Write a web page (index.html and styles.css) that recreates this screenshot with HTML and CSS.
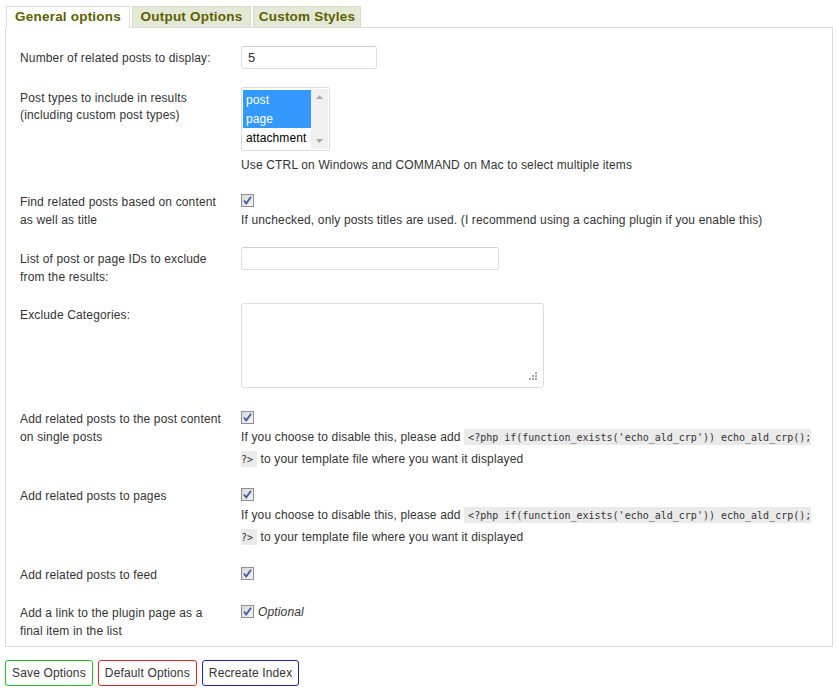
FILE: index.html
```html
<!DOCTYPE html>
<html>
<head>
<meta charset="utf-8">
<link rel="stylesheet" href="styles.css">
</head>
<body>
<div class="wrap">
  <ul class="tabs">
    <li class="tab tab--active tab--general">General options</li>
    <li class="tab tab--output">Output Options</li>
    <li class="tab tab--styles">Custom Styles</li>
  </ul>
  <div class="panel">
    <div class="row">
      <div class="label label--input">Number of related posts to display:</div>
      <div class="field"><input class="text-input text-input--short" type="text" value="5"></div>
    </div>
    <div class="row">
      <div class="label label--list">Post types to include in results (including custom post types)</div>
      <div class="field field--list">
        <div class="listbox">
          <div class="listbox__options">
            <div class="listbox__opt listbox__opt--sel">post</div>
            <div class="listbox__opt listbox__opt--sel">page</div>
            <div class="listbox__opt">attachment</div>
          </div>
          <div class="listbox__scroll">
            <svg class="arrow" width="7" height="4" viewBox="0 0 7 4"><path d="M0 4 L3.5 0 L7 4 Z" fill="#a9a9a9"/></svg>
            <svg class="arrow" width="7" height="4" viewBox="0 0 7 4"><path d="M0 0 L3.5 4 L7 0 Z" fill="#a9a9a9"/></svg>
          </div>
        </div>
        <p class="hint hint--after-list">Use CTRL on Windows and COMMAND on Mac to select multiple items</p>
      </div>
    </div>
    <div class="row row--content">
      <div class="label">Find related posts based on content as well as title</div>
      <div class="field">
        <span class="check"><svg width="13" height="13" viewBox="0 0 13 13"><defs><linearGradient id="cb1" x1="0" y1="0" x2="1" y2="1"><stop offset="0" stop-color="#d8d8d8"/><stop offset="1" stop-color="#f4f4f4"/></linearGradient></defs><rect x="0.5" y="0.5" width="12" height="12" fill="url(#cb1)" stroke="#8e8f8f"/><path d="M3 6.5 L5.2 9.5 L10 2.8" fill="none" stroke="#3d5c9e" stroke-width="1.8"/></svg></span>
        <p class="hint hint--after-check">If unchecked, only posts titles are used. (I recommend using a caching plugin if you enable this)</p>
      </div>
    </div>
    <div class="row">
      <div class="label label--input">List of post or page IDs to exclude from the results:</div>
      <div class="field"><input class="text-input text-input--long" type="text" value=""></div>
    </div>
    <div class="row">
      <div class="label label--input">Exclude Categories:</div>
      <div class="field">
        <div class="textarea">
          <svg class="grip" width="9" height="9" viewBox="0 0 9 9"><g fill="#a8a8a8"><rect x="7" y="0" width="2" height="2"/><rect x="4" y="3" width="2" height="2"/><rect x="7" y="3" width="2" height="2"/><rect x="1" y="6" width="2" height="2"/><rect x="4" y="6" width="2" height="2"/><rect x="7" y="6" width="2" height="2"/></g></svg>
        </div>
      </div>
    </div>
    <div class="row">
      <div class="label">Add related posts to the post content on single posts</div>
      <div class="field field--code">
        <span class="check"><svg width="13" height="13" viewBox="0 0 13 13"><rect x="0.5" y="0.5" width="12" height="12" fill="url(#cb1)" stroke="#8e8f8f"/><path d="M3 6.5 L5.2 9.5 L10 2.8" fill="none" stroke="#3d5c9e" stroke-width="1.8"/></svg></span>
        <p class="hint hint--code">If you choose to disable this, please add <code>&lt;?php if(function_exists('echo_ald_crp')) echo_ald_crp(); ?&#8288;&gt;</code> to your template file where you want it displayed</p>
      </div>
    </div>
    <div class="row">
      <div class="label">Add related posts to pages</div>
      <div class="field field--code field--code-last">
        <span class="check"><svg width="13" height="13" viewBox="0 0 13 13"><rect x="0.5" y="0.5" width="12" height="12" fill="url(#cb1)" stroke="#8e8f8f"/><path d="M3 6.5 L5.2 9.5 L10 2.8" fill="none" stroke="#3d5c9e" stroke-width="1.8"/></svg></span>
        <p class="hint hint--code">If you choose to disable this, please add <code>&lt;?php if(function_exists('echo_ald_crp')) echo_ald_crp(); ?&#8288;&gt;</code> to your template file where you want it displayed</p>
      </div>
    </div>
    <div class="row">
      <div class="label">Add related posts to feed</div>
      <div class="field field--single">
        <span class="check"><svg width="13" height="13" viewBox="0 0 13 13"><rect x="0.5" y="0.5" width="12" height="12" fill="url(#cb1)" stroke="#8e8f8f"/><path d="M3 6.5 L5.2 9.5 L10 2.8" fill="none" stroke="#3d5c9e" stroke-width="1.8"/></svg></span>
      </div>
    </div>
    <div class="row row--last">
      <div class="label">Add a link to the plugin page as a final item in the list</div>
      <div class="field">
        <span class="check check--inline"><svg width="13" height="13" viewBox="0 0 13 13"><rect x="0.5" y="0.5" width="12" height="12" fill="url(#cb1)" stroke="#8e8f8f"/><path d="M3 6.5 L5.2 9.5 L10 2.8" fill="none" stroke="#3d5c9e" stroke-width="1.8"/></svg></span><em class="optional">Optional</em>
      </div>
    </div>
  </div>
  <div class="buttons">
    <button class="btn btn--save">Save Options</button>
    <button class="btn btn--default">Default Options</button>
    <button class="btn btn--index">Recreate Index</button>
  </div>
</div>
</body>
</html>
```
FILE: styles.css
```css
body {
  margin: 0;
  background: #fff;
  font-family: "Liberation Sans", Arial, sans-serif;
  font-size: 12px;
  letter-spacing: 0.15px;
  color: #333;
}
.wrap {
  width: 828px;
  margin: 6px 0 0 5px;
}
.tabs {
  display: flex;
  gap: 2px;
  margin: 0;
  padding: 0 0 0 1px;
  list-style: none;
  height: 21px;
}
.tab {
  box-sizing: border-box;
  height: 21px;
  padding: 0;
  text-align: center;
  border: 1px solid #d6dac6;
  border-bottom: none;
  background: #e4e8d6;
  color: #5e5f00;
  font: bold 13.5px/20px "Liberation Sans", Arial, sans-serif;
  letter-spacing: 0.2px;
}
.tab--general { width: 124px; }
.tab--output { width: 119px; }
.tab--styles { width: 108px; }
.tab--active {
  position: relative;
  z-index: 1;
  height: 22px;
  background: #fff;
  border-color: #dcdcdc;
}
.panel {
  border: 1px solid #dcdcdc;
  padding: 8px 4px 0;
}
.row {
  display: grid;
  grid-template-columns: 224px 1fr;
}
.label {
  padding: 9px 10px 7px;
  line-height: 18px;
}
.label--input { padding-top: 13px; }
.label--list { padding-top: 12px; line-height: 17px; }
.field {
  padding: 8px 10px 9px 7px;
  line-height: 18px;
}
.field--list { padding-bottom: 10px; }
.row--content .label { padding-bottom: 8px; }
.row--content .field { padding-bottom: 5px; }
.field--code { padding-bottom: 8px; }
.field--code-last { padding-bottom: 9px; }
.field--code-last .hint--code { margin-top: 4px; }
.field--single { padding-bottom: 12px; }
.row--last .label { padding-bottom: 6px; }
.text-input {
  display: block;
  box-sizing: border-box;
  margin: 2px 0 0;
  height: 23px;
  padding: 0 6px;
  border: 1px solid #dfdfdf;
  border-top-color: #cfcfcf;
  border-radius: 3px;
  font: 13px "Liberation Sans", Arial, sans-serif;
  color: #333;
  background: #fff;
  outline: none;
}
.text-input--short { width: 136px; }
.text-input--long { width: 258px; }
.listbox {
  display: flex;
  box-sizing: border-box;
  width: 89px;
  height: 64px;
  margin-top: 1px;
  padding: 1px;
  border: 1px solid #dcdcdc;
  border-radius: 2px;
  background: #fff;
}
.listbox__options {
  flex: 1;
  padding-top: 1px;
}
.listbox__opt {
  height: 19px;
  line-height: 20px;
  padding-left: 3px;
  font-size: 12px;
  letter-spacing: 0.1px;
  color: #000;
}
.listbox__opt--sel {
  background: #3399ff;
  color: #fff;
}
.listbox__scroll {
  width: 17px;
  background: #f0f0f0;
  display: flex;
  flex-direction: column;
  justify-content: space-between;
  align-items: center;
  padding: 6px 0 6px;
}
.arrow { display: block; }
.hint {
  margin: 0;
  line-height: 18px;
}
.hint--after-list { margin-top: 5px; }
.hint--after-check { margin-top: 4px; }
.hint--code { margin-top: 2px; line-height: 21.5px; }
code {
  font-family: "DejaVu Sans Mono", monospace;
  font-size: 10px;
  letter-spacing: 0;
  background: #eaeaea;
  padding: 3px 4px 2px;
  color: #333;
}
.check {
  display: block;
  width: 13px;
  height: 13px;
  margin: 2px 0 3px;
}
.check svg { display: block; }
.check--inline {
  display: inline-block;
  vertical-align: -2px;
  margin: 0 4px 0 0;
}
.optional {
  font-style: italic;
}
.textarea {
  position: relative;
  box-sizing: border-box;
  width: 303px;
  height: 85px;
  margin: 2px 0 4px;
  border: 1px solid #dcdcdc;
  border-radius: 3px;
  background: #fff;
}
.grip {
  position: absolute;
  right: 6px;
  bottom: 6px;
}
.buttons {
  display: flex;
  gap: 5px;
  margin-top: 13px;
}
.btn {
  box-sizing: border-box;
  height: 26px;
  padding: 0 6px;
  background: #fff;
  border: 1px solid;
  border-radius: 3px;
  font: 12px "Liberation Sans", Arial, sans-serif;
  letter-spacing: 0.15px;
  color: #333;
}
.btn--save { border-color: #22bb22; }
.btn--default { border-color: #ee2222; }
.btn--index { border-color: #2222bb; }
```
